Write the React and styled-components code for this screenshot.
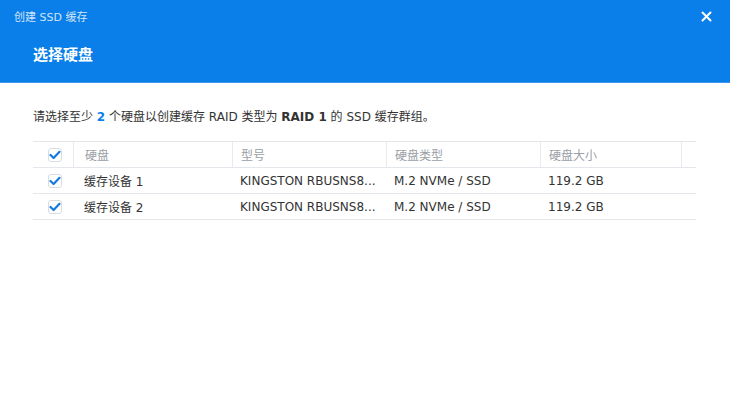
import React from "react";
import styled, { createGlobalStyle } from "styled-components";

const Global = createGlobalStyle`
  html, body { margin: 0; padding: 0; background: #fff; }
  body { font-family: "DejaVu Sans", "Noto Sans CJK SC", sans-serif; }
`;

const Dialog = styled.div`
  width: 730px;
  height: 400px;
  background: #fff;
  display: flex;
  flex-direction: column;
`;

const Header = styled.div`
  height: 83px;
  box-sizing: border-box;
  background: #0a7fe9;
  border-bottom: 1px solid #3b97ee;
  display: flex;
  flex-direction: column;
  position: relative;
`;

const Title = styled.div`
  font-size: 11px;
  color: rgba(255, 255, 255, 0.82);
  padding: 9px 0 0 14px;
  height: 17px;
  line-height: 17px;
`;

const Subtitle = styled.div`
  font-size: 15px;
  font-weight: bold;
  color: #fff;
  padding: 0 0 0 33px;
  margin-top: 19px;
  line-height: 20px;
`;

const Close = styled.button`
  position: absolute;
  right: 17px;
  top: 9px;
  width: 14px;
  height: 14px;
  padding: 0;
  border: none;
  background: transparent;
  display: flex;
  align-items: center;
  justify-content: center;
`;

const Body = styled.div`
  padding: 26px 34px 0 33px;
`;

const Desc = styled.p`
  margin: 0;
  font-size: 12px;
  line-height: 16px;
  color: #333;
`;

const Num = styled.b`
  color: #0a7fe9;
`;

const Strong = styled.b`
  color: #333;
`;

const Table = styled.div`
  margin-top: 16px;
  border-top: 1px solid #e3e6ea;
  display: grid;
  grid-template-columns: 40px 159px 154px 154px 141px 15px;
`;

const Cell = styled.div`
  height: 26px;
  box-sizing: border-box;
  border-bottom: 1px solid #e3e6ea;
  border-left: ${(p) => (p.$divider ? "1px solid #e8eaed" : "none")};
  display: flex;
  align-items: center;
  justify-content: ${(p) => (p.$center ? "center" : "flex-start")};
  padding-left: ${(p) => (p.$pad ?? 0)}px;
  font-size: 12px;
  color: ${(p) => (p.$head ? "#9aa0a6" : "#333")};
  white-space: nowrap;
  overflow: hidden;
`;

const Box = styled.span`
  width: 14px;
  height: 14px;
  box-sizing: border-box;
  border: 1px solid #d7dce2;
  border-radius: 3px;
  background: #fff;
  display: flex;
  align-items: center;
  justify-content: center;
  margin-left: 4px;
`;

const Check = () => (
  <Box>
    <svg width="12" height="10" viewBox="0 0 12 10">
      <path d="M1.5 5 L4.6 8 L10.5 1.8" fill="none" stroke="#1479e0" strokeWidth="2.2" strokeLinecap="round" strokeLinejoin="round" />
    </svg>
  </Box>
);

const heads = ["硬盘", "型号", "硬盘类型", "硬盘大小"];
const pads = [11, 8, 8, 8];

const rows = [
  ["缓存设备 1", "KINGSTON RBUSNS8...", "M.2 NVMe / SSD", "119.2 GB"],
  ["缓存设备 2", "KINGSTON RBUSNS8...", "M.2 NVMe / SSD", "119.2 GB"],
];

export default function App() {
  return (
    <>
      <Global />
      <Dialog>
        <Header>
          <Title>创建 SSD 缓存</Title>
          <Subtitle>选择硬盘</Subtitle>
          <Close aria-label="close">
            <svg width="11" height="11" viewBox="0 0 11 11">
              <path d="M1.5 1.5 L9.5 9.5 M9.5 1.5 L1.5 9.5" stroke="#fff" strokeWidth="2" strokeLinecap="round" />
            </svg>
          </Close>
        </Header>
        <Body>
          <Desc>
            请选择至少 <Num>2</Num> 个硬盘以创建缓存 RAID 类型为 <Strong>RAID 1</Strong> 的 SSD 缓存群组。
          </Desc>
          <Table>
            <Cell $center $head><Check /></Cell>
            {heads.map((h, i) => (
              <Cell key={h} $head $divider $pad={pads[i]}>{h}</Cell>
            ))}
            <Cell $head $divider />
            {rows.map((r, i) => (
              <React.Fragment key={i}>
                <Cell $center><Check /></Cell>
                {r.map((v, j) => (
                  <Cell key={j} $pad={pads[j]}>{v}</Cell>
                ))}
                <Cell />
              </React.Fragment>
            ))}
          </Table>
        </Body>
      </Dialog>
    </>
  );
}
